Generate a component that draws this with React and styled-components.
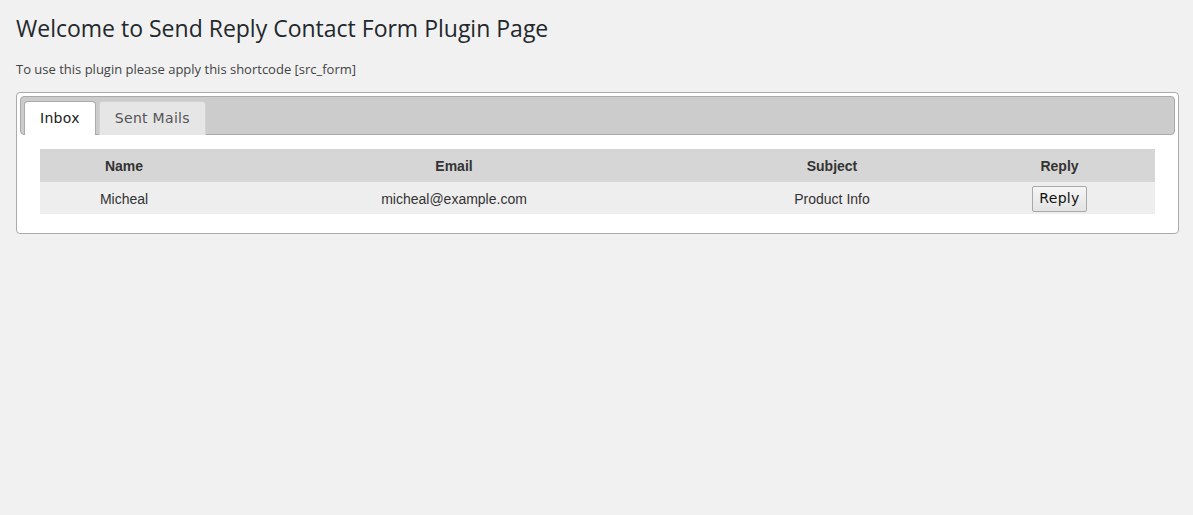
import React, { useState } from "react";
import styled, { createGlobalStyle } from "styled-components";

const Global = createGlobalStyle`
  html, body { margin: 0; padding: 0; background: #f1f1f1; }
  body { font-family: "Open Sans", "Liberation Sans", sans-serif; color: #444; }
`;

const Wrap = styled.div`
  padding: 14px 14px 0 16px;
`;

const Title = styled.h1`
  margin: 0;
  font-family: "Open Sans", sans-serif;
  font-size: 23px;
  font-weight: 400;
  line-height: 29px;
  color: #23282d;
`;

const Note = styled.p`
  margin: 17px 0 14px;
  font-size: 13px;
  line-height: 18px;
  color: #444;
`;

const TabsBox = styled.div`
  border: 1px solid #aaa;
  border-radius: 4px;
  background: #fff;
  padding: 3px;
`;

const TabList = styled.ul`
  display: flex;
  gap: 3px;
  list-style: none;
  margin: 0;
  padding: 4px 3px 0;
  border: 1px solid #aaa;
  border-radius: 4px;
  background: #cccccc;
`;

const Tab = styled.li`
  margin-bottom: -1px;
  padding: 8px 15px 8px;
  border: 1px solid ${(p) => (p.$active ? "#aaa" : "#d3d3d3")};
  border-bottom: none;
  border-radius: 4px 4px 0 0;
  background: ${(p) => (p.$active ? "#fff" : "#e6e6e6")};
  color: ${(p) => (p.$active ? "#212121" : "#555")};
  font-family: "DejaVu Sans", Verdana, sans-serif;
  font-size: 14px;
  letter-spacing: 0.3px;
  line-height: 17px;
  cursor: pointer;
`;

const Panel = styled.div`
  padding: 14px 20px 16px;
`;

const Table = styled.table`
  width: 100%;
  border-collapse: collapse;
  font-family: "Liberation Sans", Arial, sans-serif;
  font-size: 14px;
  color: #333;
  table-layout: fixed;
`;

const Col = styled.col`
  width: ${(p) => p.$w}px;
`;

const HeadCell = styled.th`
  background: #d6d6d6;
  height: 33px;
  padding: 0;
  font-weight: 700;
  text-align: center;
`;

const Cell = styled.td`
  background: #eeeeee;
  height: 31px;
  padding: 1px 0 0;
  text-align: center;
`;

const ReplyButton = styled.button`
  font-family: "DejaVu Sans", Verdana, sans-serif;
  font-size: 14px;
  letter-spacing: 0.3px;
  color: #111;
  padding: 3px 6px 4px;
  border: 1px solid #a9a9a9;
  border-radius: 2px;
  background: linear-gradient(#f6f6f6, #e3e3e3);
  line-height: 17px;
  cursor: pointer;
`;

const rows = [
  { name: "Micheal", email: "micheal@example.com", subject: "Product Info" },
];

export default function App() {
  const [tab, setTab] = useState(0);
  return (
    <>
      <Global />
      <Wrap>
        <Title>Welcome to Send Reply Contact Form Plugin Page</Title>
        <Note>To use this plugin please apply this shortcode [src_form]</Note>
        <TabsBox>
          <TabList>
            {["Inbox", "Sent Mails"].map((t, i) => (
              <Tab key={t} $active={tab === i} onClick={() => setTab(i)}>
                {t}
              </Tab>
            ))}
          </TabList>
          <Panel>
            <Table>
              <colgroup>
                <Col $w={168} />
                <Col $w={492} />
                <Col $w={264} />
                <Col $w={191} />
              </colgroup>
              <thead>
                <tr>
                  <HeadCell>Name</HeadCell>
                  <HeadCell>Email</HeadCell>
                  <HeadCell>Subject</HeadCell>
                  <HeadCell>Reply</HeadCell>
                </tr>
              </thead>
              <tbody>
                {rows.map((r) => (
                  <tr key={r.email}>
                    <Cell>{r.name}</Cell>
                    <Cell>{r.email}</Cell>
                    <Cell>{r.subject}</Cell>
                    <Cell>
                      <ReplyButton>Reply</ReplyButton>
                    </Cell>
                  </tr>
                ))}
              </tbody>
            </Table>
          </Panel>
        </TabsBox>
      </Wrap>
    </>
  );
}
